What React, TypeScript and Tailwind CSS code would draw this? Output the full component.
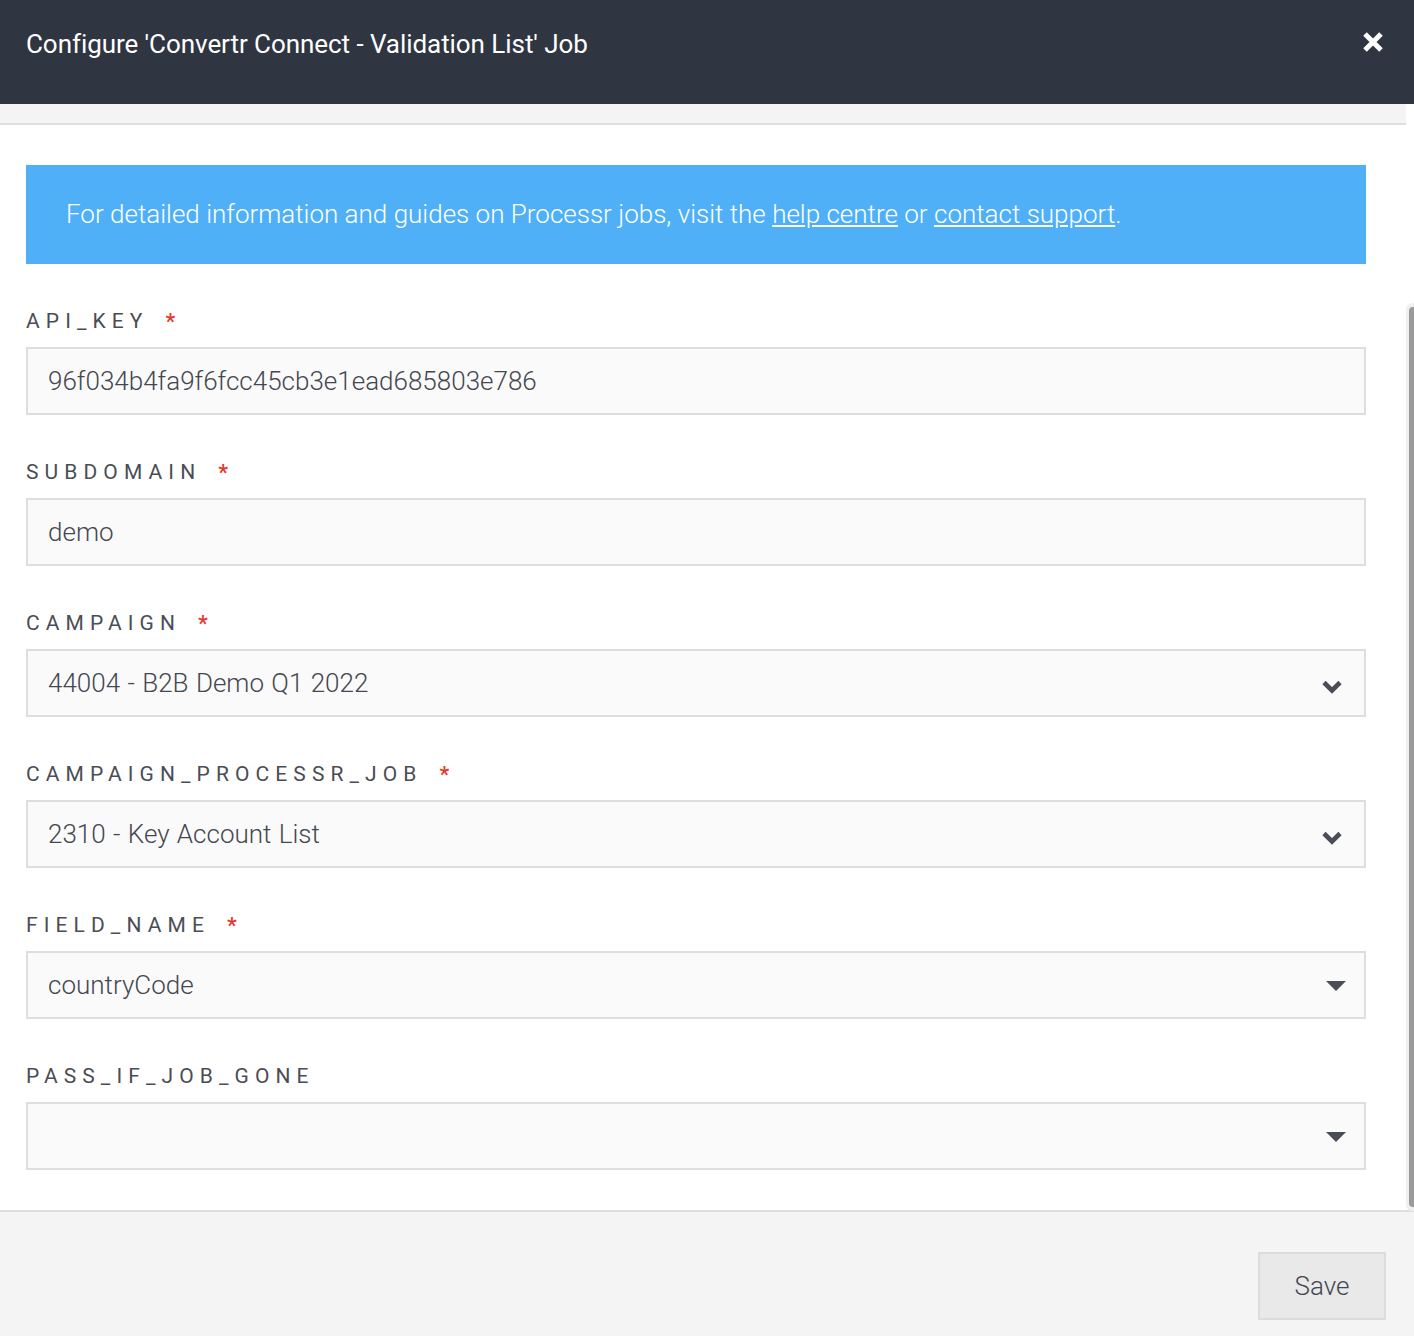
type Field = {
  label: string;
  required?: boolean;
  value: string;
  kind: 'input' | 'chevron' | 'caret';
};

const fields: Field[] = [
  { label: 'API_KEY', required: true, value: '96f034b4fa9f6fcc45cb3e1ead685803e786', kind: 'input' },
  { label: 'SUBDOMAIN', required: true, value: 'demo', kind: 'input' },
  { label: 'CAMPAIGN', required: true, value: '44004 - B2B Demo Q1 2022', kind: 'chevron' },
  { label: 'CAMPAIGN_PROCESSR_JOB', required: true, value: '2310 - Key Account List', kind: 'chevron' },
  { label: 'FIELD_NAME', required: true, value: 'countryCode', kind: 'caret' },
  { label: 'PASS_IF_JOB_GONE', value: '', kind: 'caret' },
];

const FormField = ({ field }: { field: Field }) => (
  <div className="mb-[48px] last:mb-0">
    <div className="flex h-[19px] items-center text-[21px] font-normal leading-[19px] tracking-[6.1px] text-[#4a4d55]">
      <span>{field.label}</span>
      {field.required && <span className="ml-[17px] text-[22px] font-medium tracking-normal text-[#e8352b]">*</span>}
    </div>
    <div className="mt-[16px] flex h-[68px] items-center justify-between border-2 border-[#dedede] bg-[#fafafa] pl-[20px] text-[26px] text-[#44474f]">
      <span className={field.kind === 'chevron' ? '[word-spacing:1px]' : ''}>{field.value}</span>
      {field.kind === 'chevron' && (
        <svg className="mr-[21px] mt-[8px] h-[16px] w-[22px] text-[#4a4d55]" viewBox="0 0 22 16" fill="none">
          <path d="M3 3.5 L11 11.5 L19 3.5" stroke="currentColor" strokeWidth="4.6" />
        </svg>
      )}
      {field.kind === 'caret' && (
        <span className="mr-[18px] mt-[1px] h-0 w-0 border-x-[10px] border-t-[10px] border-x-transparent border-t-[#4a4d55]" />
      )}
    </div>
  </div>
);

const App = () => {
  return (
    <div className="relative flex h-[1336px] w-[1414px] flex-col overflow-hidden bg-white font-['Roboto',sans-serif] font-light">
      <header className="flex h-[104px] shrink-0 items-center justify-between bg-[#2f3541] px-[26px] text-[26px] font-normal tracking-[-0.06px] text-white">
        <span className="mt-[-16px]">Configure 'Convertr Connect - Validation List' Job</span>
        <svg className="mr-[4px] mt-[-20px] h-[22px] w-[22px]" viewBox="0 0 22 22" fill="none">
          <path d="M3 3 L19 19 M19 3 L3 19" stroke="white" strokeWidth="5" />
        </svg>
      </header>
      <div className="mr-[8px] h-[21px] shrink-0 border-b-2 border-[#dedede] bg-[#f4f4f4]" />
      <main className="min-h-0 flex-1 pl-[26px] pr-[48px] pt-[40px]">
        <div className="mb-[48px] flex h-[99px] items-center bg-[#4fb0f8] pl-[40px] text-[26px] text-white">
          <span>
            For detailed information and guides on Processr jobs, visit the{' '}
            <span className="underline">help centre</span> or <span className="underline">contact support</span>.
          </span>
        </div>
        {fields.map(f => (
          <FormField key={f.label} field={f} />
        ))}
      </main>
      <footer className="flex h-[126px] shrink-0 items-start justify-end border-t-2 border-[#dedede] bg-[#f4f4f4] pr-[28px] pt-[40px]">
        <button className="flex h-[68px] w-[128px] items-center justify-center border-2 border-[#dcdcdc] bg-[#e9e9e9] text-[26px] text-[#44474f]">
          Save
        </button>
      </footer>
      {/* overlay scrollbar */}
      <div className="absolute left-[1406px] top-[303px] h-[908px] w-[8px] rounded-l-[6px] bg-[#f0f0f0]">
        <div className="ml-[3px] mt-[4px] h-[900px] w-[5px] rounded-l-[4px] bg-[#9a9a9a]" />
      </div>
    </div>
  );
};

export default App;
